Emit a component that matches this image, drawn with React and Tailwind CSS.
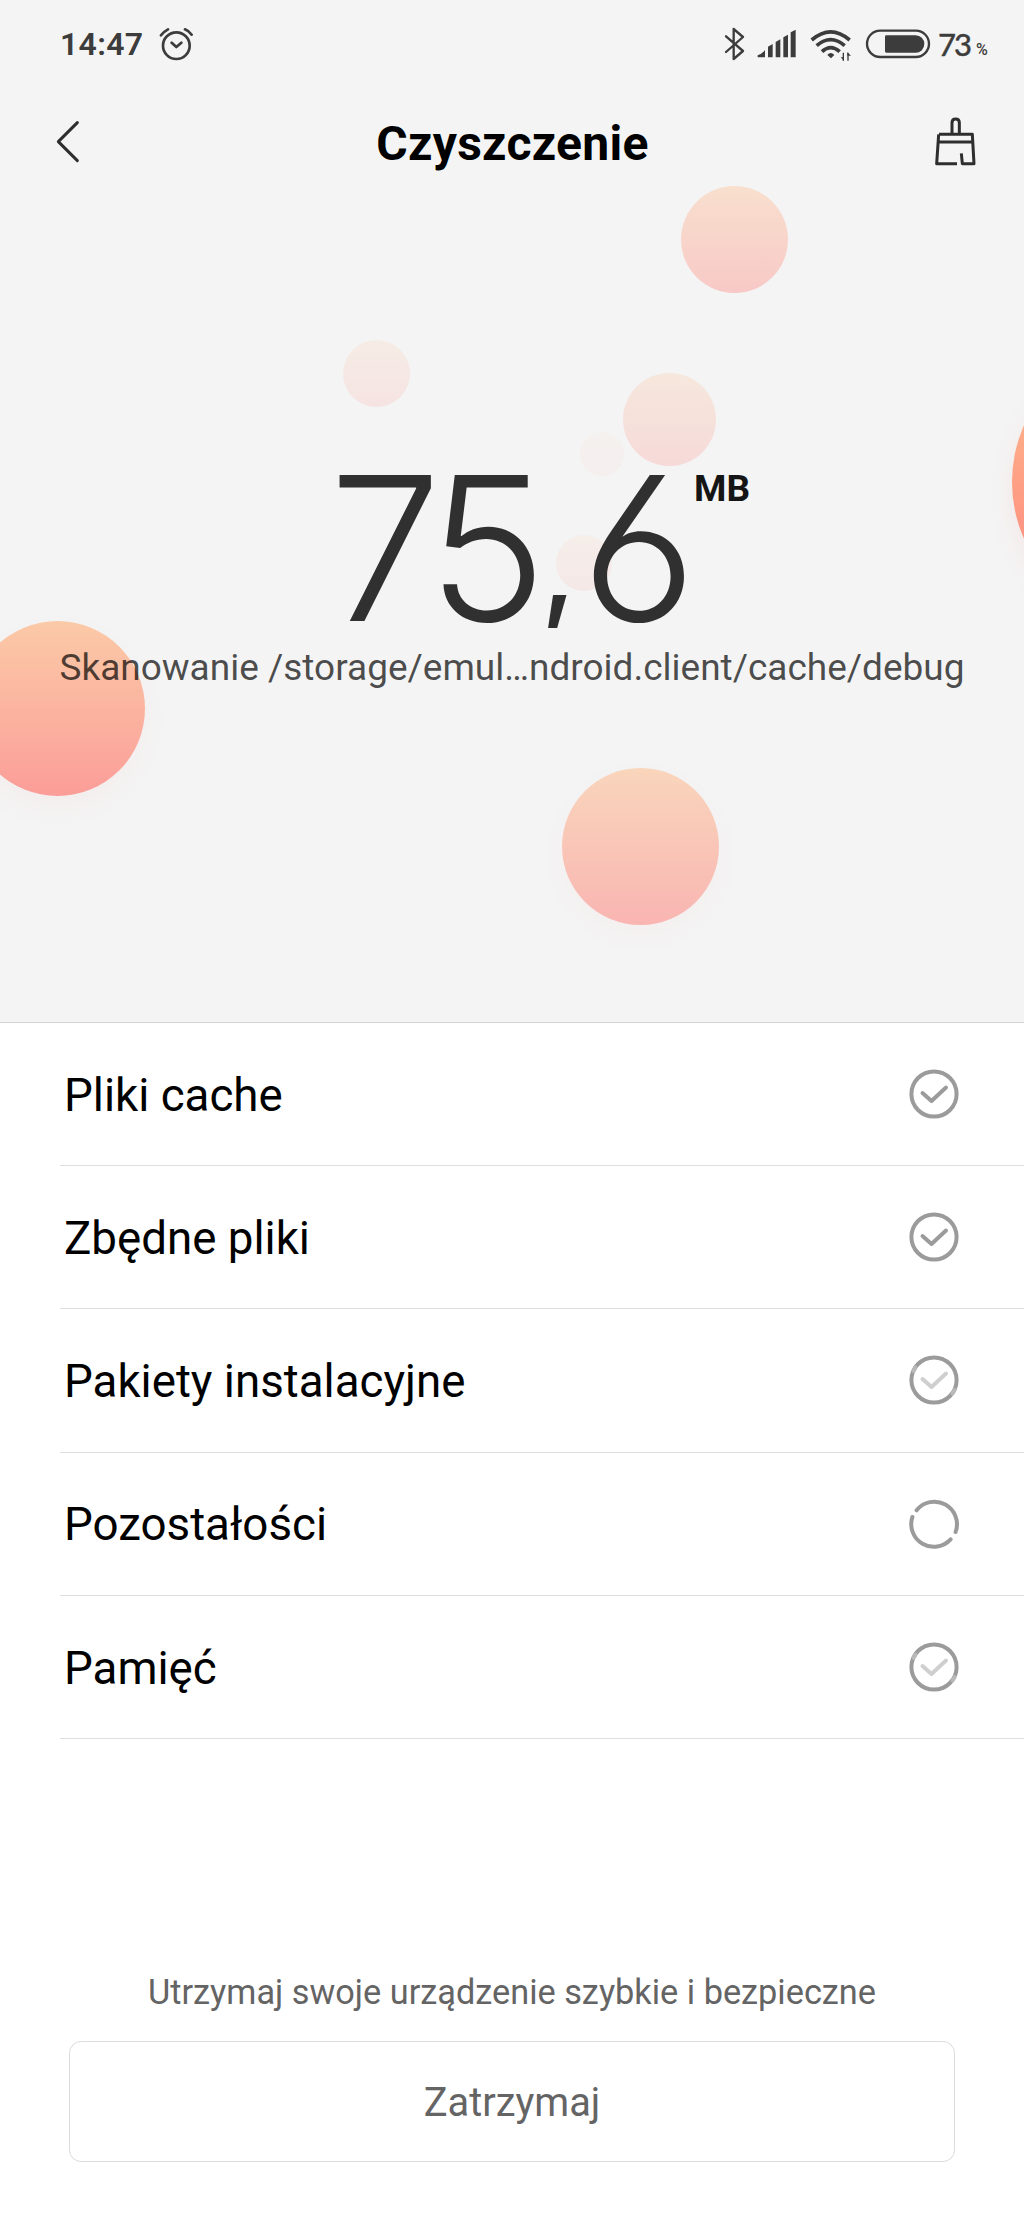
import React from 'react';

const BUBBLES = [
    'left-[681px] top-[186px] size-[107px] opacity-[0.36]',
    'left-[343px] top-[340px] size-[67px] opacity-[0.14]',
    'left-[623px] top-[373px] size-[93px] opacity-[0.22]',
    'left-[580px] top-[432px] size-[44px] opacity-[0.05]',
    'left-[556px] top-[535px] size-[56px] opacity-[0.10]',
    'left-[1012px] top-[342px] size-[280px] opacity-[0.95] shadow-[0_12px_24px_rgba(255,124,118,0.10)]',
    'left-[-30px] top-[621px] size-[175px] opacity-[0.72] shadow-[0_12px_24px_rgba(255,124,118,0.06)]',
    'left-[562px] top-[768px] size-[157px] opacity-[0.52] shadow-[0_10px_22px_rgba(255,124,118,0.06)]',
];

const ITEMS = [
    { label: 'Pliki cache', status: 'done' },
    { label: 'Zbędne pliki', status: 'done' },
    { label: 'Pakiety instalacyjne', status: 'finishing' },
    { label: 'Pozostałości', status: 'loading' },
    { label: 'Pamięć', status: 'finishing' },
];

const AlarmIcon = () => (
    <svg viewBox="477 80 102 102" className="size-[34px]" fill="none" stroke="currentColor" strokeWidth="8" strokeLinecap="round" strokeLinejoin="round">
        <circle cx="529" cy="136" r="40" />
        <path d="M515 127l14 13 15-13M483 105q8-11 21-18M555 87q12 5 20 16" />
    </svg>
);

const BluetoothIcon = () => (
    <svg viewBox="102 80 63 102" className="h-[34px] w-[21px]" fill="none" stroke="currentColor" strokeWidth="7" strokeLinecap="round" strokeLinejoin="round">
        <path d="M108 108l51 44-28 24V86l28 24-51 45" />
    </svg>
);

const SignalIcon = () => (
    <svg viewBox="201 80 120 102" className="ml-3 h-[34px] w-[40px]" fill="currentColor">
        <path d="M203 171v-6q14-5 22-16v22zM234 171v-32l14-8v40zM257 171v-46l14-8v54zM280 171v-60l14-8v68zM302 171V96l15-8v83z" />
    </svg>
);

const WifiIcon = () => (
    <svg viewBox="360 80 126 105" className="ml-[13px] h-[35px] w-[42px]" fill="none" stroke="currentColor" strokeWidth="11">
        <path d="M365 119q57-49 114 0M380 136q42-36 84 0M396 154q26-24 53 0" />
        <path d="M412 164q10-12 21 0l-10 10z" fill="currentColor" stroke="none" />
        <path d="M460 181v-24M474 157v24" strokeWidth="4" />
        <path d="M452 171l10 11v-11zM472 156v10h11z" fill="currentColor" stroke="none" />
    </svg>
);

const BatteryIcon = () => (
    <svg viewBox="525 80 198 102" className="ml-[13px] h-[34px] w-[66px]" fill="none" stroke="currentColor" strokeWidth="7">
        <rect x="531" y="91" width="186" height="79" rx="39.5" />
        <path d="M589 105h88a26 26 0 0 1 0 52h-88q-4 0-4-4v-44q0-4 4-4z" fill="currentColor" stroke="none" />
    </svg>
);

const BroomIcon = () => (
    <svg viewBox="732 350 129 147" className="h-[49px] w-[43px]" fill="none" stroke="currentColor" strokeWidth="9" strokeLinejoin="round">
        <path d="M786 402v-35q0-11 11-11t11 11v35M747 402h100l5 88h-35l-3-31M801 490h-61l6-88M746 425h102" />
    </svg>
);

const StatusIcon = ({ status }) => {
    if (status === 'loading') {
        return (
            <svg viewBox="0 0 50 50" className="size-[50px] text-[#9b9b9b]" fill="none" stroke="currentColor" strokeWidth="4" strokeLinecap="round">
                <path d="M7.6 11.3A22.6 22.6 0 0 1 46.6 33M41.6 40.3A22.6 22.6 0 0 1 3.4 18" />
            </svg>
        );
    }
    return (
        <svg viewBox="0 0 50 50" className="size-[50px] text-[#9b9b9b]" fill="none" stroke="currentColor" strokeWidth="4" strokeLinecap="round" strokeLinejoin="round">
            <circle cx="25" cy="25" r="22.6" />
            <path d="M13.5 24L22.5 32L37 18.5" className={status === 'finishing' ? 'text-[#cfcfcf]' : ''} stroke="currentColor" />
            {status === 'finishing' && (
                <path d="M4.5 16L6.5 12.5M43.5 38.5L45.7 35" className="text-[#b9b9b9]" stroke="currentColor" />
            )}
        </svg>
    );
};

const StatusBar = () => (
    <div className="flex h-[88px] items-center justify-between pl-[60px] pr-[34px] text-[#3c3c3c]">
        <div className="flex items-center gap-[16px]">
            <span className="text-[32px] font-semibold leading-[32px] tracking-[0.3px]">14:47</span>
            <AlarmIcon />
        </div>
        <div className="flex items-center">
            <BluetoothIcon />
            <SignalIcon />
            <WifiIcon />
            <BatteryIcon />
            <span className="ml-[7px] w-[38px] font-[Lato] text-[31px] leading-[32px] tracking-[-2px] [-webkit-text-stroke:0.5px]">73</span>
            <span className="w-[14px] pt-[12px] text-[16px] font-medium leading-[16px]">%</span>
        </div>
    </div>
);

const App = () => {
    return (
        <div className="flex h-[2219px] w-[1024px] flex-col bg-white font-[Roboto,sans-serif]">
            <section className="relative h-[1023px] overflow-hidden border-b border-[#d4d4d4] bg-[#f4f4f4]">
                {BUBBLES.map((bubble) => (
                    <div key={bubble} className={`absolute rounded-full bg-linear-to-b from-[#ffba8a] to-[#ff7c76] ${bubble}`} />
                ))}
                <div className="relative">
                    <StatusBar />
                    <header className="flex h-[106px] items-center justify-between pl-[55px] pr-[47px] text-[#2e2e2e]">
                        <svg viewBox="165 360 75 129" className="h-[43px] w-[25px]" fill="none" stroke="currentColor" strokeWidth="9" strokeLinecap="round" strokeLinejoin="round">
                            <path d="M232 368l-57 57 57 57" />
                        </svg>
                        <h1 className="pl-[11px] pt-[5px] text-[48px] font-bold tracking-[0.3px] text-black">Czyszczenie</h1>
                        <BroomIcon />
                    </header>
                    <div className="mt-[275px] flex h-[152px] items-start pl-[329px] font-[Inter] text-[201px] font-light leading-[146px] text-[#303030]">
                        <span className="mt-[6px] w-[212px] tracking-[-12px]">75</span>
                        <span className="mt-[23px] w-[40px] text-[116px] font-medium leading-[146px]">,</span>
                        <span className="mt-[6px] w-[113px] [font-feature-settings:'cv03']">6</span>
                        <span className="font-[Roboto] text-[37px] font-bold leading-[40px] text-[#151515]">MB</span>
                    </div>
                    <p className="mt-[25px] whitespace-nowrap text-center text-[37px] leading-[44px] text-black/70">
                        Skanowanie /storage/emul…ndroid.client/cache/debug
                    </p>
                </div>
            </section>

            <ul className="ml-[60px]">
                {ITEMS.map((item) => (
                    <li key={item.label} className="flex h-[143.2px] items-center justify-between border-b border-[#dedede] pl-1 pr-[65px]">
                        <span className="pt-[4px] text-[45.7px] text-black">{item.label}</span>
                        <StatusIcon status={item.status} />
                    </li>
                ))}
            </ul>

            <footer className="mt-auto flex flex-col items-center pb-[57px]">
                <p className="text-[34.3px] leading-[40px] text-[#646464]">Utrzymaj swoje urządzenie szybkie i bezpieczne</p>
                <button className="mt-[29px] h-[121px] w-[886px] rounded-[12px] border border-[#dcdcdc] pt-[3px] text-[39.8px] text-[#646464]">
                    Zatrzymaj
                </button>
            </footer>
        </div>
    );
};

export default App;
